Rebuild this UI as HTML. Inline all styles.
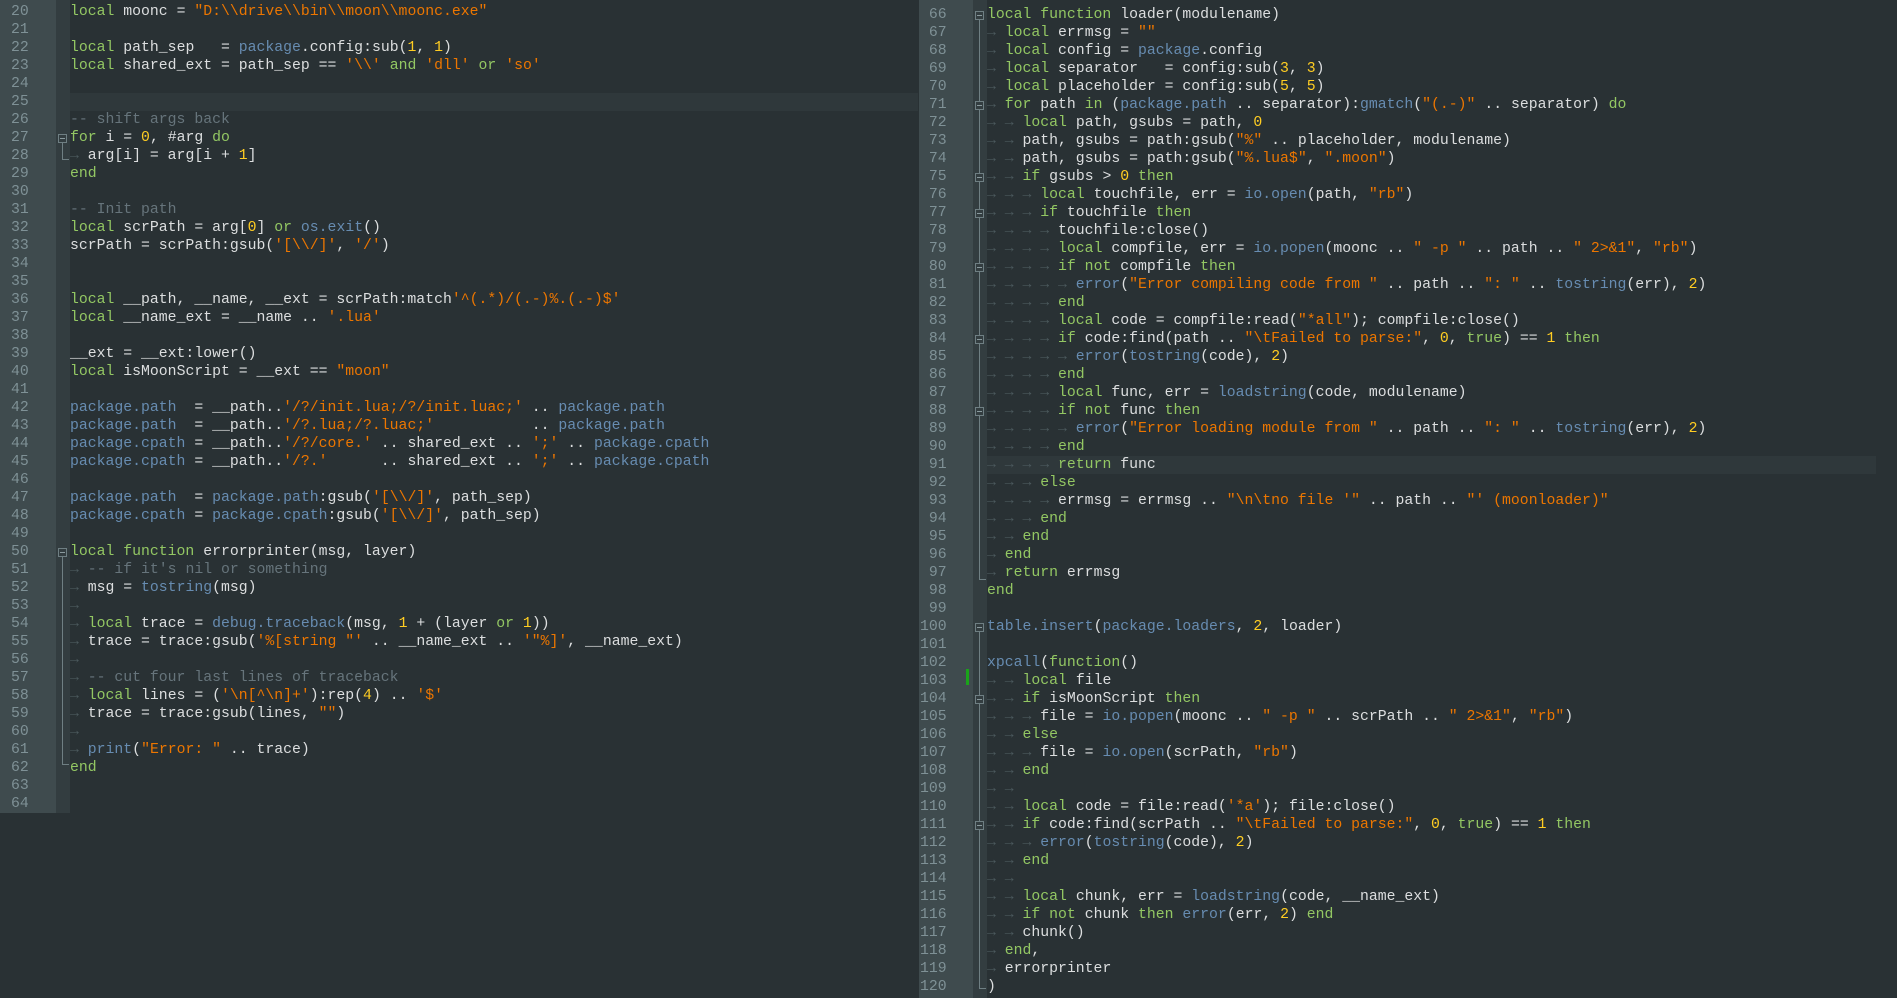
<!DOCTYPE html>
<html><head><meta charset="utf-8"><style>
html,body{margin:0;padding:0;background:#293134;width:1897px;height:998px;overflow:hidden}
.ln{position:absolute;height:18px;line-height:18px;font-family:"Liberation Mono",monospace;font-size:14.8px;color:#dcdedf;white-space:pre}
.num{position:absolute;height:18px;line-height:18px;font-family:"Liberation Mono",monospace;font-size:14.8px;color:#7f9196;white-space:pre}
.k{color:#93c763}.s{color:#ec7600}.n{color:#ffcd22}.c{color:#66747b}.b{color:#678cb1}
i{font-style:normal;color:#4b585c}
.box{position:absolute;width:9px;height:9px;border:1px solid #6f7f83;background:#333d40;box-sizing:border-box}
.box:after{content:"";position:absolute;left:1px;right:1px;top:3px;height:1px;background:#8a9a9e}
.vl{position:absolute;width:1px;background:#6f7f83}
.hl{position:absolute;height:1px;width:7px;background:#6f7f83}
</style></head><body>
<div style="position:absolute;left:0;top:0;width:56px;height:813px;background:#3f4b4e"></div>
<div style="position:absolute;left:56px;top:0;width:14px;height:813px;background:#333d40"></div>
<div style="position:absolute;left:70px;top:93px;width:848px;height:18px;background:#2f383b"></div>
<div style="position:absolute;left:919px;top:0;width:54px;height:998px;background:#3f4b4e"></div>
<div style="position:absolute;left:973px;top:0;width:14px;height:998px;background:#333d40"></div>
<div style="position:absolute;left:987px;top:456px;width:889px;height:18px;background:#2f383b"></div>
<div style="position:absolute;left:966px;top:669px;width:3px;height:16px;background:#1aa31a"></div>

<div class="num" style="left:11px;top:3px">20
21
22
23
24
25
26
27
28
29
30
31
32
33
34
35
36
37
38
39
40
41
42
43
44
45
46
47
48
49
50
51
52
53
54
55
56
57
58
59
60
61
62
63
64</div>
<div class="num" style="left:920px;top:6px"> 66
 67
 68
 69
 70
 71
 72
 73
 74
 75
 76
 77
 78
 79
 80
 81
 82
 83
 84
 85
 86
 87
 88
 89
 90
 91
 92
 93
 94
 95
 96
 97
 98
 99
100
101
102
103
104
105
106
107
108
109
110
111
112
113
114
115
116
117
118
119
120</div>

<div class="vl" style="left:62px;top:138px;height:22px"></div><div class="hl" style="left:62px;top:159px"></div>
<div class="box" style="left:58px;top:134px"></div>
<div class="vl" style="left:62px;top:552px;height:213px"></div><div class="hl" style="left:62px;top:764px"></div>
<div class="box" style="left:58px;top:548px"></div>
<div class="vl" style="left:979px;top:15px;height:564px"></div><div class="hl" style="left:979px;top:579px"></div>
<div class="vl" style="left:979px;top:627px;height:362px"></div><div class="hl" style="left:979px;top:988px"></div>
<div class="box" style="left:975px;top:11px"></div>
<div class="box" style="left:975px;top:101px"></div>
<div class="box" style="left:975px;top:173px"></div>
<div class="box" style="left:975px;top:209px"></div>
<div class="box" style="left:975px;top:263px"></div>
<div class="box" style="left:975px;top:335px"></div>
<div class="box" style="left:975px;top:407px"></div>
<div class="box" style="left:975px;top:623px"></div>
<div class="box" style="left:975px;top:695px"></div>
<div class="box" style="left:975px;top:821px"></div>

<div class="ln" style="left:70px;top:3px"><span class="k">local</span> moonc = <span class="s">"D:\\drive\\bin\\moon\\moonc.exe"</span>

<span class="k">local</span> path_sep   = <span class="b">package</span>.config:sub(<span class="n">1</span>, <span class="n">1</span>)
<span class="k">local</span> shared_ext = path_sep == <span class="s">'\\'</span> <span class="k">and</span> <span class="s">'dll'</span> <span class="k">or</span> <span class="s">'so'</span>


<span class="c">-- shift args back</span>
<span class="k">for</span> i = <span class="n">0</span>, #arg <span class="k">do</span>
<i>→ </i>arg[i] = arg[i + <span class="n">1</span>]
<span class="k">end</span>

<span class="c">-- Init path</span>
<span class="k">local</span> scrPath = arg[<span class="n">0</span>] <span class="k">or</span> <span class="b">os.exit</span>()
scrPath = scrPath:gsub(<span class="s">'[\\/]'</span>, <span class="s">'/'</span>)


<span class="k">local</span> __path, __name, __ext = scrPath:match<span class="s">'^(.*)/(.-)%.(.-)$'</span>
<span class="k">local</span> __name_ext = __name .. <span class="s">'.lua'</span>

__ext = __ext:lower()
<span class="k">local</span> isMoonScript = __ext == <span class="s">"moon"</span>

<span class="b">package.path</span>  = __path..<span class="s">'/?/init.lua;/?/init.luac;'</span> .. <span class="b">package.path</span>
<span class="b">package.path</span>  = __path..<span class="s">'/?.lua;/?.luac;'</span>           .. <span class="b">package.path</span>
<span class="b">package.cpath</span> = __path..<span class="s">'/?/core.'</span> .. shared_ext .. <span class="s">';'</span> .. <span class="b">package.cpath</span>
<span class="b">package.cpath</span> = __path..<span class="s">'/?.'</span>      .. shared_ext .. <span class="s">';'</span> .. <span class="b">package.cpath</span>

<span class="b">package.path</span>  = <span class="b">package.path</span>:gsub(<span class="s">'[\\/]'</span>, path_sep)
<span class="b">package.cpath</span> = <span class="b">package.cpath</span>:gsub(<span class="s">'[\\/]'</span>, path_sep)

<span class="k">local function</span> errorprinter(msg, layer)
<i>→ </i><span class="c">-- if it's nil or something</span>
<i>→ </i>msg = <span class="b">tostring</span>(msg)
<i>→ </i>
<i>→ </i><span class="k">local</span> trace = <span class="b">debug.traceback</span>(msg, <span class="n">1</span> + (layer <span class="k">or</span> <span class="n">1</span>))
<i>→ </i>trace = trace:gsub(<span class="s">'%[string "'</span> .. __name_ext .. <span class="s">'"%]'</span>, __name_ext)
<i>→ </i>
<i>→ </i><span class="c">-- cut four last lines of traceback</span>
<i>→ </i><span class="k">local</span> lines = (<span class="s">'\n[^\n]+'</span>):rep(<span class="n">4</span>) .. <span class="s">'$'</span>
<i>→ </i>trace = trace:gsub(lines, <span class="s">""</span>)
<i>→ </i>
<i>→ </i><span class="b">print</span>(<span class="s">"Error: "</span> .. trace)
<span class="k">end</span></div>

<div class="ln" style="left:987px;top:6px"><span class="k">local function</span> loader(modulename)
<i>→ </i><span class="k">local</span> errmsg = <span class="s">""</span>
<i>→ </i><span class="k">local</span> config = <span class="b">package</span>.config
<i>→ </i><span class="k">local</span> separator   = config:sub(<span class="n">3</span>, <span class="n">3</span>)
<i>→ </i><span class="k">local</span> placeholder = config:sub(<span class="n">5</span>, <span class="n">5</span>)
<i>→ </i><span class="k">for</span> path <span class="k">in</span> (<span class="b">package.path</span> .. separator):<span class="b">gmatch</span>(<span class="s">"(.-)"</span> .. separator) <span class="k">do</span>
<i>→ → </i><span class="k">local</span> path, gsubs = path, <span class="n">0</span>
<i>→ → </i>path, gsubs = path:gsub(<span class="s">"%"</span> .. placeholder, modulename)
<i>→ → </i>path, gsubs = path:gsub(<span class="s">"%.lua$"</span>, <span class="s">".moon"</span>)
<i>→ → </i><span class="k">if</span> gsubs &gt; <span class="n">0</span> <span class="k">then</span>
<i>→ → → </i><span class="k">local</span> touchfile, err = <span class="b">io.open</span>(path, <span class="s">"rb"</span>)
<i>→ → → </i><span class="k">if</span> touchfile <span class="k">then</span>
<i>→ → → → </i>touchfile:close()
<i>→ → → → </i><span class="k">local</span> compfile, err = <span class="b">io.popen</span>(moonc .. <span class="s">" -p "</span> .. path .. <span class="s">" 2&gt;&amp;1"</span>, <span class="s">"rb"</span>)
<i>→ → → → </i><span class="k">if not</span> compfile <span class="k">then</span>
<i>→ → → → → </i><span class="b">error</span>(<span class="s">"Error compiling code from "</span> .. path .. <span class="s">": "</span> .. <span class="b">tostring</span>(err), <span class="n">2</span>)
<i>→ → → → </i><span class="k">end</span>
<i>→ → → → </i><span class="k">local</span> code = compfile:read(<span class="s">"*all"</span>); compfile:close()
<i>→ → → → </i><span class="k">if</span> code:find(path .. <span class="s">"\tFailed to parse:"</span>, <span class="n">0</span>, <span class="k">true</span>) == <span class="n">1</span> <span class="k">then</span>
<i>→ → → → → </i><span class="b">error</span>(<span class="b">tostring</span>(code), <span class="n">2</span>)
<i>→ → → → </i><span class="k">end</span>
<i>→ → → → </i><span class="k">local</span> func, err = <span class="b">loadstring</span>(code, modulename)
<i>→ → → → </i><span class="k">if not</span> func <span class="k">then</span>
<i>→ → → → → </i><span class="b">error</span>(<span class="s">"Error loading module from "</span> .. path .. <span class="s">": "</span> .. <span class="b">tostring</span>(err), <span class="n">2</span>)
<i>→ → → → </i><span class="k">end</span>
<i>→ → → → </i><span class="k">return</span> func
<i>→ → → </i><span class="k">else</span>
<i>→ → → → </i>errmsg = errmsg .. <span class="s">"\n\tno file '"</span> .. path .. <span class="s">"' (moonloader)"</span>
<i>→ → → </i><span class="k">end</span>
<i>→ → </i><span class="k">end</span>
<i>→ </i><span class="k">end</span>
<i>→ </i><span class="k">return</span> errmsg
<span class="k">end</span>

<span class="b">table.insert</span>(<span class="b">package.loaders</span>, <span class="n">2</span>, loader)

<span class="b">xpcall</span>(<span class="k">function</span>()
<i>→ → </i><span class="k">local</span> file
<i>→ → </i><span class="k">if</span> isMoonScript <span class="k">then</span>
<i>→ → → </i>file = <span class="b">io.popen</span>(moonc .. <span class="s">" -p "</span> .. scrPath .. <span class="s">" 2&gt;&amp;1"</span>, <span class="s">"rb"</span>)
<i>→ → </i><span class="k">else</span>
<i>→ → → </i>file = <span class="b">io.open</span>(scrPath, <span class="s">"rb"</span>)
<i>→ → </i><span class="k">end</span>
<i>→ → </i>
<i>→ → </i><span class="k">local</span> code = file:read(<span class="s">'*a'</span>); file:close()
<i>→ → </i><span class="k">if</span> code:find(scrPath .. <span class="s">"\tFailed to parse:"</span>, <span class="n">0</span>, <span class="k">true</span>) == <span class="n">1</span> <span class="k">then</span>
<i>→ → → </i><span class="b">error</span>(<span class="b">tostring</span>(code), <span class="n">2</span>)
<i>→ → </i><span class="k">end</span>
<i>→ → </i>
<i>→ → </i><span class="k">local</span> chunk, err = <span class="b">loadstring</span>(code, __name_ext)
<i>→ → </i><span class="k">if not</span> chunk <span class="k">then</span> <span class="b">error</span>(err, <span class="n">2</span>) <span class="k">end</span>
<i>→ → </i>chunk()
<i>→ </i><span class="k">end</span>,
<i>→ </i>errorprinter
)</div>
</body></html>
